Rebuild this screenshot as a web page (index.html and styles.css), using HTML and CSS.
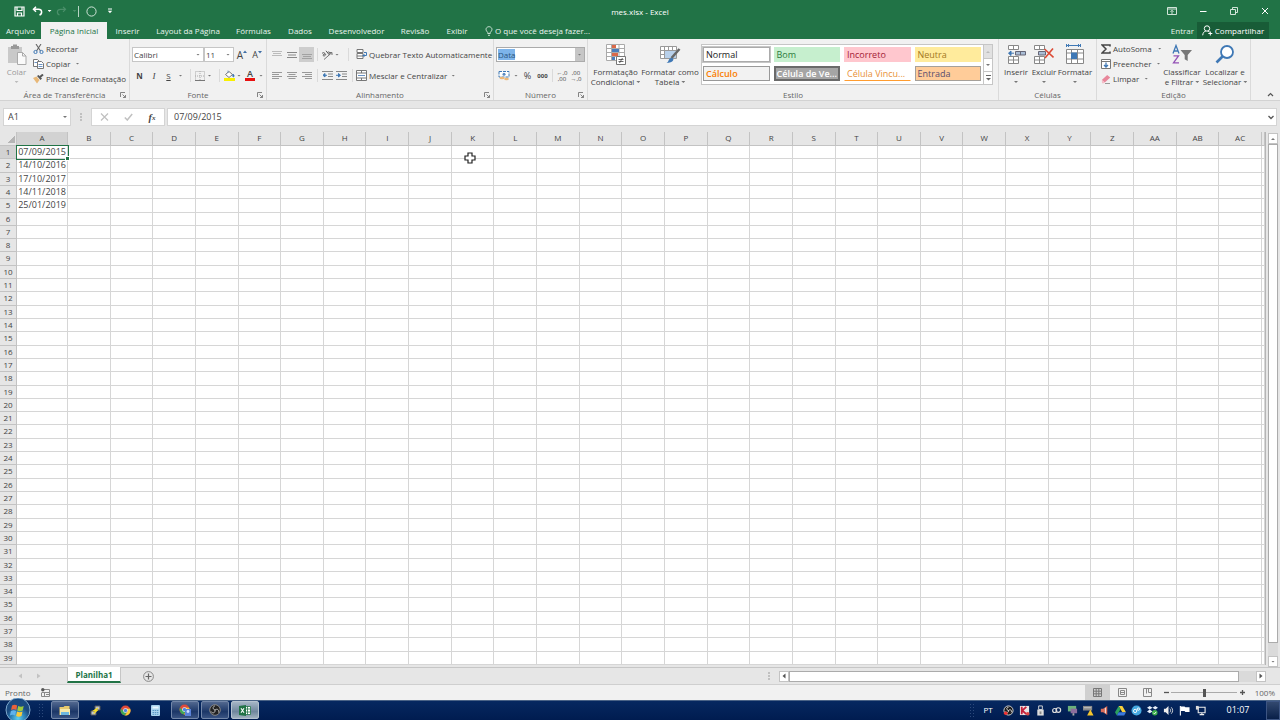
FILE: index.html
```html
<!DOCTYPE html>
<html lang="pt-BR">
<head>
<meta charset="utf-8">
<title>mes.xlsx - Excel</title>
<link rel="stylesheet" href="styles.css">
</head>
<body>
<header class="titlebar">
  <div class="qat">
    <button aria-label="Salvar"><svg width="11" height="11" viewBox="0 0 11 11"><path d="M1 1h9v9H1zM3 1v3.500h5V1M3.500 10V7h4v3" fill="none" stroke="#fff" stroke-width="1.200"/></svg></button>
    <button aria-label="Desfazer"><svg width="11" height="10" viewBox="0 0 11 10"><path d="M4 .8 1.500 3.300 4 5.800M1.700 3.300H6.500c4 0 4 4.500 1 5.700" fill="none" stroke="#fff" stroke-width="1.500"/></svg></button>
    <i class="caret light"></i>
    <button aria-label="Refazer"><svg width="11" height="10" viewBox="0 0 11 10"><path d="M7 .8 9.500 3.300 7 5.800M9.300 3.300H4.500c-4 0-4 4.500-1 5.700" fill="none" stroke="#4b8f6a" stroke-width="1.200"/></svg></button>
    <i class="caret dim"></i>
    <i class="qat-sep"></i>
    <button aria-label="Forma"><svg width="11" height="11" viewBox="0 0 11 11"><circle cx="5.500" cy="5.500" r="4.600" fill="none" stroke="#cfe3d7"/></svg></button>
    <button aria-label="Personalizar"><svg width="6" height="6" viewBox="0 0 6 6"><path d="M1 1h4" stroke="#fff"/><path d="M.8 2.800h4.400L3 5.200z" fill="#fff"/></svg></button>
  </div>
  <h1>mes.xlsx - Excel</h1>
  <div class="window-controls">
    <button aria-label="Opções da faixa"><svg width="10" height="8" viewBox="0 0 10 8"><path d="M.5.5h9v7h-9zM.5 2h9M5 7V3.500M3.500 4.800 5 3.300l1.500 1.500" fill="none" stroke="#e4f0e9" stroke-width=".9"/></svg></button>
    <button aria-label="Minimizar"><svg width="8" height="8" viewBox="0 0 8 8"><path d="M1 4.500h6.500" stroke="#fff"/></svg></button>
    <button aria-label="Restaurar"><svg width="8" height="8" viewBox="0 0 8 8"><path d="M.5 2.500h5v5h-5zM2.500 2.500v-2h5v5h-2" fill="none" stroke="#e4f0e9" stroke-width=".9"/></svg></button>
    <button aria-label="Fechar"><svg width="8" height="8" viewBox="0 0 8 8"><path d="m1 1 6 6M7 1 1 7" stroke="#fff"/></svg></button>
  </div>
</header>
<nav class="tabs">
  <button>Arquivo</button><button class="active">Página Inicial</button><button>Inserir</button><button>Layout da Página</button><button>Fórmulas</button><button>Dados</button><button>Desenvolvedor</button><button>Revisão</button><button>Exibir</button>
  <button class="tell"><svg width="8" height="10" viewBox="0 0 8 10"><path d="M2.700 7.500V6.300C-.5 3.500 1.500.7 4 .7s4.500 2.800 1.300 5.600v1.200zM3 9.300h2" fill="none" stroke="#d8eadf" stroke-width=".9"/></svg>O que você deseja fazer...</button>
  <button class="entrar">Entrar</button>
  <button class="share"><svg width="11" height="11" viewBox="0 0 11 11"><circle cx="5" cy="3.500" r="2.700" fill="none" stroke="#fff"/><path d="M.7 10.300c.2-2.600 1.500-4 3-4M5.700 6.200c1 0 1.600.4 2 1M8.300 6.500v4M6.300 8.500h4" fill="none" stroke="#fff"/></svg>Compartilhar</button>
</nav>
<main class="ribbon">
  <section class="group g-clip">
    <div class="body">
      <button class="big off"><svg width="20" height="21" viewBox="0 0 20 21"><path d="M1 3h14v16H1z" fill="#c9c9c9"/><path d="M4 2h2V.5h4V2h2v3H4z" fill="#999"/><path d="M10.500 8.500h5l3.500 3.500v8.500h-8.500z" fill="#fafafa" stroke="#aaa"/><path d="M15.500 8.500V12H19" fill="none" stroke="#aaa"/></svg><span>Colar</span><i class="caret dimgrey"></i></button>
      <div class="stack">
        <button><svg width="11" height="10" viewBox="0 0 11 10"><path d="m3 0 4.500 7M8 0 3.500 7" stroke="#666" stroke-width="1.100"/><circle cx="2.500" cy="8" r="1.600" fill="none" stroke="#3f78b5"/><circle cx="8.500" cy="8" r="1.600" fill="none" stroke="#3f78b5"/></svg>Recortar</button>
        <button><svg width="11" height="10" viewBox="0 0 11 10"><path d="M.5.5h4l1.500 1.500v5.500H.5z" fill="#fff" stroke="#777"/><path d="M4.500 2.500h4l2 2v5h-6z" fill="#fff" stroke="#777"/><path d="M5.500 5.500h4M5.500 7.500h4M1.500 3.500H4" stroke="#6b93c4"/></svg>Copiar<i class="caret"></i></button>
        <button><svg width="11" height="10" viewBox="0 0 11 10"><path d="m0 4 3.500-1.500L6.500 6 4 9.500z" fill="#e8b878"/><path d="m4 2 3.500 4 1.500-1.500L5.500 1z" fill="#555"/><path d="m7 3 3-2.500" stroke="#555" stroke-width="2"/></svg>Pincel de Formatação</button>
      </div>
    </div>
    <footer><span>Área de Transferência</span><svg class="launch" width="6" height="6"><use href="#launch"/></svg></footer>
  </section>
  <section class="group g-font">
    <div class="body two">
      <div class="row f1">
        <div class="combo"><input aria-label="Fonte" value="Calibri"><button aria-label="Abrir"><i class="caret"></i></button></div>
        <div class="combo"><input aria-label="Tamanho" value="11"><button aria-label="Abrir"><i class="caret"></i></button></div>
        <button class="fs">A<svg width="4" height="4" viewBox="0 0 4 4"><path d="m0 3 2-2.500L4 3z" fill="#3f6ea5"/></svg></button>
        <button class="fs small">A<svg width="4" height="4" viewBox="0 0 4 4"><path d="m0 1 2 2.500L4 1z" fill="#3f6ea5"/></svg></button>
      </div>
      <div class="row f2">
        <button><b>N</b></button><button class="ital">I</button><button><u>S</u></button><i class="caret"></i><i class="vsep"></i>
        <button aria-label="Bordas"><svg width="10" height="10" viewBox="0 0 10 10"><path d="M.5.5h9v9h-9zM5 0v10M0 5h10" fill="none" stroke="#aaa" stroke-dasharray="1 1"/><path d="M0 9.500h10" stroke="#777"/></svg></button><i class="caret"></i><i class="vsep"></i>
        <button aria-label="Preenchimento"><svg width="11" height="11" viewBox="0 0 11 11"><path d="m1.500 4.500 3.500-3 3.500 3-3.500 3z" fill="#fff" stroke="#777"/><path d="M4 3V.5M9 4c2 1.500 1 3 .3 3S8.300 5 9 4" fill="#3f78b5" stroke="#3f78b5" stroke-width=".6"/><path d="M0 8h11v3H0z" fill="#f8f000"/></svg></button><i class="caret"></i>
        <button class="fcolor">A</button><i class="caret"></i>
      </div>
    </div>
    <footer><span>Fonte</span><svg class="launch" width="6" height="6"><use href="#launch"/></svg></footer>
  </section>
  <section class="group g-align">
    <div class="body two">
      <div class="row a1">
        <button aria-label="Superior"><svg width="10" height="8" viewBox="0 0 10 8"><path d="M0 .5h10M1 2.500h8M0 4.500h10" stroke="#bbb"/></svg></button>
        <button aria-label="Meio"><svg width="10" height="8" viewBox="0 0 10 8"><path d="M0 1.500h10M1 4h8M0 6.500h10" stroke="#888"/></svg></button>
        <button aria-label="Inferior" class="pressed"><svg width="10" height="8" viewBox="0 0 10 8"><path d="M0 3.500h10M1 5.500h8M0 7.500h10" stroke="#a2a2a2"/></svg></button>
        <i class="vsep"></i>
        <button aria-label="Orientação"><svg width="12" height="10" viewBox="0 0 12 10"><path d="m3 9.500 8-7M11 5V2.500H8.500" fill="none" stroke="#777"/><path d="M1 3.500c2-2 3 0 4 1.500M4 4C1 4 2 7.500 4.500 5.200M5 .8l3 3.700c1.800-1.500.2-3.500-1.500-2" fill="none" stroke="#555"/></svg></button><i class="caret"></i><i class="vsep"></i>
        <button class="lbl"><svg width="11" height="11" viewBox="0 0 11 11"><path d="M1 .5h6v3H1zM1 4.500h6v5H1zM1 7h6" fill="#fff" stroke="#777"/><path d="M8 3.500h2.500v3H7M8.500 5 7 6.500 8.500 8" fill="none" stroke="#3f78b5"/></svg>Quebrar Texto Automaticamente</button>
      </div>
      <div class="row a2">
        <button aria-label="Esquerda"><svg width="10" height="8" viewBox="0 0 10 8"><path d="M0 .5h10M0 2.500h7M0 4.500h10M0 6.500h7" stroke="#999"/></svg></button>
        <button aria-label="Centro"><svg width="10" height="8" viewBox="0 0 10 8"><path d="M0 .5h10M1.500 2.500h7M0 4.500h10M1.500 6.500h7" stroke="#999"/></svg></button>
        <button aria-label="Direita"><svg width="10" height="8" viewBox="0 0 10 8"><path d="M0 .5h10M3 2.500h7M0 4.500h10M3 6.500h7" stroke="#999"/></svg></button>
        <i class="vsep"></i>
        <button aria-label="Diminuir recuo"><svg width="11" height="9" viewBox="0 0 11 9"><path d="M0 .5h11M6 3h5M6 5.500h5M0 8.500h11" stroke="#888"/><path d="M5 4.300H1.500M3 2.500 1 4.300 3 6z" fill="#3f78b5" stroke="#3f78b5"/></svg></button>
        <button aria-label="Aumentar recuo"><svg width="11" height="9" viewBox="0 0 11 9"><path d="M0 .5h11M6 3h5M6 5.500h5M0 8.500h11" stroke="#888"/><path d="M0 4.300h3.500M2.500 2.500l2 1.800-2 1.700z" fill="#3f78b5" stroke="#3f78b5"/></svg></button>
        <i class="vsep"></i>
        <button class="lbl"><svg width="11" height="11" viewBox="0 0 11 11"><path d="M.5.5h10v10H.5zM.5 3h10M.5 8h10M5.500.5V3M5.500 8v2.500" fill="#fff" stroke="#777"/><path d="M2 5.500h7" stroke="#6b93c4"/></svg>Mesclar e Centralizar<i class="caret"></i></button>
      </div>
    </div>
    <footer><span>Alinhamento</span><svg class="launch" width="6" height="6"><use href="#launch"/></svg></footer>
  </section>
  <section class="group g-num">
    <div class="body two">
      <div class="row n1"><div class="combo picked"><input aria-label="Formato de número" value="Data"><button aria-label="Abrir"><i class="caret"></i></button></div></div>
      <div class="row n2">
        <button aria-label="Moeda"><svg width="12" height="11" viewBox="0 0 12 11"><path d="M1 1.500h10v5.500H1z" fill="#fff" stroke="#3f78b5" stroke-dasharray="3 1"/><circle cx="6" cy="4.200" r="1.500" fill="#5a8ac0"/><ellipse cx="4" cy="8" rx="2.500" ry="1.300" fill="#edb878"/><ellipse cx="8.500" cy="9" rx="2.300" ry="1.300" fill="#edb878"/></svg></button><i class="caret"></i>
        <button class="pct">%</button><button class="dec"><b>000</b></button><i class="vsep"></i>
        <button class="dec" aria-label="Aumentar casas"><span>←,0</span><span>,00</span></button>
        <button class="dec" aria-label="Diminuir casas"><span>,00</span><span>→,0</span></button>
      </div>
    </div>
    <footer><span>Número</span><svg class="launch" width="6" height="6"><use href="#launch"/></svg></footer>
  </section>
  <section class="group g-style">
    <div class="body">
      <button class="big"><svg width="20" height="21" viewBox="0 0 20 21"><path d="M.5.5h18v16H.5zM.5 4.500h18M.5 8.500h18M.5 12.500h18M5.500.5v16M13 .5v16" fill="#fff" stroke="#aaa"/><path d="M6 1h4v3H6zM6 9h6v3H6z" fill="#d9694a"/><path d="M6 5h7v3H6zM6 13h3v3H6z" fill="#4a7dbb"/><path d="M10.500 12.500h9v8h-9z" fill="#fff" stroke="#777"/><path d="M12.500 15.500h5M12.500 17.500h5M16.500 14l-3 5" stroke="#444" stroke-width=".8"/></svg><span>Formatação</span><span>Condicional<i class="caret"></i></span></button>
      <button class="big"><svg width="21" height="21" viewBox="0 0 21 21"><path d="M.5 2.500h16v12H.5zM.5 6.500h16M.5 10.500h16M4.500 2.500v12M8.500 2.500v12M12.500 2.500v12" fill="#fff" stroke="#999"/><path d="M5 7h11v7H5z" fill="#b8d0ea"/><path d="m19.500 5-8 9" stroke="#666" stroke-width="2.500"/><path d="M6 19c3 0 2-5 5.500-5s2.500 5-5.500 5" fill="#3f78b5"/></svg><span>Formatar como</span><span>Tabela<i class="caret"></i></span></button>
      <div class="gallery">
        <div class="swatches">
          <button class="s-normal">Normal</button><button class="s-bom">Bom</button><button class="s-inc">Incorreto</button><button class="s-neu">Neutra</button>
          <button class="s-calc">Cálculo</button><button class="s-ver">Célula de Ve...</button><button class="s-vin">Célula Vincu...</button><button class="s-ent">Entrada</button>
        </div>
        <div class="spin"><button class="off" aria-label="Acima"><i class="caret up dimgrey"></i></button><button aria-label="Abaixo"><i class="caret"></i></button><button aria-label="Mais"><svg width="5" height="6" viewBox="0 0 5 6"><path d="M0 .5h5" stroke="#666"/><path d="M0 3h5L2.500 5.500z" fill="#666"/></svg></button></div>
      </div>
    </div>
    <footer><span>Estilo</span></footer>
  </section>
  <section class="group g-cells">
    <div class="body">
      <button class="big"><svg width="19" height="21" viewBox="0 0 19 21"><path d="M1.500 1.500h10v4h-10zM6.500 1.500v4M1.500 12.500h10v7h-10zM6.500 12.500v7M1.500 16h10" fill="#fff" stroke="#888"/><path d="M8.500 7.500h10v3.500h-10z" fill="#a9bdd6" stroke="#667"/><path d="M13.500 7.500V11" stroke="#667"/><path d="M7 9.200H2M4 7 1.500 9.200 4 11.500z" fill="#3f78b5" stroke="#3f78b5"/></svg><span>Inserir</span><i class="caret"></i></button>
      <button class="big"><svg width="20" height="21" viewBox="0 0 20 21"><path d="M.5 1.500h10v4H.5zM5.500 1.500v4M.5 12.500h10v7H.5zM5.500 12.500v7M.5 16h10" fill="#fff" stroke="#888"/><path d="M4.500 7.500h7V11h-7z" fill="#a9bdd6" stroke="#667"/><path d="m10.500 5 9 8.500M19 4.500 11 14" stroke="#dc4a35" stroke-width="1.600"/></svg><span>Excluir</span><i class="caret"></i></button>
      <button class="big"><svg width="20" height="21" viewBox="0 0 20 21"><path d="M1.500 1.500h14M1.500 0v3M15.500 0v3M4 0 2.500 1.500 4 3M13 0l1.500 1.500L13 3" fill="none" stroke="#3f78b5"/><path d="M1.500 5.500h17v14h-17zM1.500 9h17M1.500 15h17M6.500 5.500v14M12.500 5.500v14" fill="#fff" stroke="#888"/><path d="M6 8.500h6V15H6z" fill="#3f78b5"/></svg><span>Formatar</span><i class="caret"></i></button>
    </div>
    <footer><span>Células</span></footer>
  </section>
  <section class="group g-edit">
    <div class="body">
      <div class="stack">
        <button><svg width="10" height="10" viewBox="0 0 10 10"><path d="M9 2.500V1H1l4 4-4 4h8V7.500" fill="none" stroke="#444" stroke-width="1.500"/></svg>AutoSoma<i class="caret wide"></i></button>
        <button><svg width="10" height="10" viewBox="0 0 10 10"><path d="M.5.5h9v9h-9zM.5 2.500h9" fill="#fff" stroke="#777"/><path d="M5 3.500V8M3 6l2 2 2-2" fill="none" stroke="#3f78b5" stroke-width="1.300"/></svg>Preencher<i class="caret"></i></button>
        <button><svg width="10" height="10" viewBox="0 0 10 10"><path d="m.8 6 5.400-5 3 2.500-5.400 5z" fill="#e8879b"/><path d="m.8 6 3 2.500L3 9.300H1z" fill="#f5bcc7"/><path d="M4 9.500h5" stroke="#999"/></svg>Limpar<i class="caret"></i></button>
      </div>
      <button class="big"><svg width="20" height="21" viewBox="0 0 20 21"><path d="M1 9.500 4 1.500l3 8M2 7h4" fill="none" stroke="#3f78b5" stroke-width="1.300"/><path d="M1.500 11.800h5l-5 7h5.500" fill="none" stroke="#9351b5" stroke-width="1.300"/><path d="M8.500 6h11.500l-4.300 5v6l-3-1.800V11z" fill="#777"/></svg><span>Classificar</span><span>e Filtrar<i class="caret"></i></span></button>
      <button class="big"><svg width="20" height="21" viewBox="0 0 20 21"><circle cx="12" cy="8" r="6" fill="#fff" stroke="#3f78b5" stroke-width="1.800"/><path d="m7.500 12.500-6 6" stroke="#3f78b5" stroke-width="2.600"/></svg><span>Localizar e</span><span>Selecionar<i class="caret"></i></span></button>
    </div>
    <footer><span>Edição</span></footer>
  </section>
  <button class="collapse" aria-label="Recolher"><svg width="7" height="5" viewBox="0 0 7 5"><path d="m1 4 2.500-2.500L6 4" fill="none" stroke="#555" stroke-width="1.200"/></svg></button>
</main>
<div class="formula">
  <div class="combo namebox"><input aria-label="Caixa de nome" value="A1"><button aria-label="Abrir"><i class="caret"></i></button></div>
  <i class="dots"></i>
  <div class="fx">
    <button aria-label="Cancelar"><svg width="9" height="8" viewBox="0 0 9 8"><path d="m1 .5 7 7M8 .5l-7 7" stroke="#c0c0c0" stroke-width="1.200"/></svg></button>
    <button aria-label="Inserir"><svg width="9" height="8" viewBox="0 0 9 8"><path d="m.8 4.500 2.500 2.500L8.200 1" fill="none" stroke="#c0c0c0" stroke-width="1.500"/></svg></button>
    <button class="fn">f<small>x</small></button>
  </div>
  <div class="combo bar"><input aria-label="Barra de fórmulas" value="07/09/2015"><button aria-label="Expandir"><svg width="6" height="5" viewBox="0 0 6 5"><path d="m.5 1 2.500 2.500L5.500 1" fill="none" stroke="#555" stroke-width="1.300"/></svg></button></div>
</div>
<div class="sheet">
  <div class="cells">
    <table id="grid"><thead></thead><tbody></tbody></table>
    <svg class="pointer" width="12" height="12" viewBox="0 0 12 12"><path d="M4 1h4v3h3v4H8v3H4V8H1V4h3z" fill="#fff" stroke="#222" stroke-width="1.200"/></svg>
  </div>
  <div class="vscroll"><button aria-label="Para cima"><i class="caret up"></i></button><div class="thumb"></div><div class="track"></div><button aria-label="Para baixo"><i class="caret"></i></button></div>
</div>
<div class="sheetbar">
  <button class="nav" aria-label="Anterior"><svg width="4" height="6" viewBox="0 0 4 6"><path d="M4 .5v5L.5 3z" fill="#c2c2c2"/></svg></button>
  <button class="nav" aria-label="Próxima"><svg width="4" height="6" viewBox="0 0 4 6"><path d="M0 .5v5L3.500 3z" fill="#c2c2c2"/></svg></button>
  <button class="sheettab">Planilha1</button>
  <button class="add" aria-label="Nova planilha"><svg width="11" height="11" viewBox="0 0 11 11"><path d="M5.500 2.500v6M2.500 5.500h6" stroke="#666" stroke-width="1.200"/><circle cx="5.500" cy="5.500" r="4.900" fill="none" stroke="#888"/></svg></button>
  <i class="dots"></i>
  <div class="hscroll"><button aria-label="Esquerda"><svg width="4" height="6" viewBox="0 0 4 6"><path d="M3.500.5v5L.5 3z" fill="#555"/></svg></button><div class="thumb"></div><div class="track"></div><button aria-label="Direita"><svg width="4" height="6" viewBox="0 0 4 6"><path d="M.5.5v5L3.500 3z" fill="#555"/></svg></button></div>
</div>
<footer class="status">
  <span>Pronto</span>
  <button class="macro" aria-label="Gravar macro"><svg width="9" height="9" viewBox="0 0 9 9"><path d="M3 1.500h5.500v7h-8V5M.5 4.500h8M3.500 4.500v4M5 6.500h3" fill="none" stroke="#888"/><circle cx="1.800" cy="1.800" r="1.700" fill="#555"/></svg></button>
  <div class="views">
    <button class="on" aria-label="Normal"><svg width="9" height="9" viewBox="0 0 9 9"><path d="M.5.500h8v8h-8zM.5 3.200h8M.5 5.800h8M3.200.5v8M5.800.5v8" fill="none" stroke="#777"/></svg></button>
    <button aria-label="Layout da página"><svg width="9" height="9" viewBox="0 0 9 9"><path d="M.5.500h8v8h-8zM2.500 2.500h4v4h-4zM3 4.500h3" fill="none" stroke="#888"/></svg></button>
    <button aria-label="Quebra de página"><svg width="9" height="9" viewBox="0 0 9 9"><path d="M.5.500h8v8h-8zM3.500.5v5M5.500.5v4h3" fill="none" stroke="#888"/></svg></button>
  </div>
  <button class="zoom-btn" aria-label="Reduzir"><svg width="5" height="5" viewBox="0 0 5 5"><path d="M0 2.500h5" stroke="#555" stroke-width="1.300"/></svg></button>
  <input type="range" aria-label="Zoom" min="0" max="100" value="50">
  <button class="zoom-btn" aria-label="Ampliar"><svg width="5" height="5" viewBox="0 0 5 5"><path d="M0 2.500h5M2.500 0v5" stroke="#555" stroke-width="1.300"/></svg></button>
  <span class="pct100">100%</span>
</footer>
<div class="taskbar">
  <button class="start" aria-label="Iniciar"><svg width="26" height="22" viewBox="0 0 26 22"><defs><radialGradient id="orb" cy=".85"><stop offset="0" stop-color="#5fd0f0"/><stop offset=".6" stop-color="#2c7fb5"/><stop offset="1" stop-color="#1a4a80"/></radialGradient></defs><circle cx="13" cy="12" r="12" fill="url(#orb)" stroke="#7fa8cc"/><path d="M7 7.500c2-1 3.500-1 5.200 0l-.9 4.500c-1.700-1-3.200-1-5.200 0z" fill="#e8623a"/><path d="M13.200 8c2 1 3.500 1 5.500 0l-1 4.500c-2 1-3.500 1-5.400 0z" fill="#9ccb3d"/><path d="M5.900 13c2-1 3.500-1 5.200 0l-1 4.500c-1.700-1-3.200-1-5.200 0z" fill="#5fb2ec"/><path d="M12.100 13.500c2 1 3.500 1 5.400 0l-1 4.500c-2 1-3.500 1-5.400 0z" fill="#f8ca3c"/></svg></button>
  <i class="grip"></i>
  <button class="app open" aria-label="Explorador"><svg width="12" height="11" viewBox="0 0 12 11"><path d="M.5 2h4l1-1h5v9H.5z" fill="#e6c96e"/><path d="M1 4h10v6H1z" fill="#f8e9a8"/><path d="M2 7h8v3H2z" fill="#6eb8e0"/></svg></button>
  <button class="app" aria-label="PuTTY"><svg width="11" height="11" viewBox="0 0 11 11"><path d="M5 1h5v4H5zM1 6h5v4H1z" fill="#bbc3cf" stroke="#555"/><path d="M8 3 4 5.500h3L3.500 8.500" fill="none" stroke="#f8de28" stroke-width="1.300"/></svg></button>
  <button class="app" aria-label="Chrome"><svg width="11" height="11" viewBox="0 0 11 11"><use href="#chrome"/></svg></button>
  <button class="app" aria-label="Calculadora"><svg width="9" height="11" viewBox="0 0 9 11"><rect width="9" height="11" rx="1" fill="#a9d3ec"/><path d="M1.500 1.500h6v2h-6z" fill="#e9f7ff"/><path d="M1.500 5.500h6M1.500 7.500h6M1.500 9.300h6" stroke="#5a98c5" stroke-dasharray="1.500 .7"/></svg></button>
  <button class="app open" aria-label="Chrome aberto"><svg width="13" height="12" viewBox="0 0 13 12"><use href="#chrome" width="11" height="11"/><path d="M6 5h6v7H6z" fill="#5a82d8"/><circle cx="9" cy="7.500" r="1.400" fill="#cfe0ff"/></svg></button>
  <button class="app open" aria-label="OBS"><svg width="12" height="12" viewBox="0 0 12 12"><circle cx="6" cy="6" r="5.300" fill="#222" stroke="#888"/><path d="M6 6c-3-1-2-4 0-4M6 6c2.500-2 4.500.5 3.500 2.500M6 6c.5 3.500-3 3.500-4 1.500" fill="none" stroke="#bbb"/></svg></button>
  <button class="app open current" aria-label="Excel"><svg width="12" height="11" viewBox="0 0 12 11"><path d="M5 1.500h6.500v8H5zM8.500 1.500v8M6 4h5M6 7h5" fill="#fff" stroke="#217346" stroke-width=".8"/><path d="M0 1 7 0v11L0 10z" fill="#217346"/><path d="m2 3.200 3 4.600M5 3.200 2 7.800" stroke="#fff" stroke-width="1.100"/></svg></button>
  <div class="tray">
    <i class="grip"></i><span class="lang">PT</span>
    <svg viewBox="0 0 12 12"><circle cx="6" cy="6" r="5" fill="#1b1b1b" stroke="#ddd"/><path d="M6 6C3 5 4 2.500 6 2.500M6 6c2-2 4 0 3 2M6 6c0 3-2.500 3-3 1" fill="none" stroke="#eee"/><circle cx="3" cy="9" r="2" fill="#e33"/></svg>
    <svg viewBox="0 0 12 12"><path d="M1 1h10v10H1z" fill="#e9e5e5"/><path d="M3 2v8M8 2 3.500 6 8 10" stroke="#c3203c" stroke-width="2" fill="none"/><circle cx="9.500" cy="9.500" r="2" fill="#d44"/></svg>
    <svg viewBox="0 0 12 12"><path d="M4 1h4v4H4z" fill="none" stroke="#ddd"/><path d="M2.500 5h7v6.500h-7z" fill="#ddd"/><path d="M5 7h2v3H5z" fill="#888"/></svg>
    <svg viewBox="0 0 12 12"><circle cx="4" cy="6" r="2.200" fill="none" stroke="#ddd" stroke-width="1.300"/><circle cx="8" cy="5.500" r="2.500" fill="none" stroke="#ddd" stroke-width="1.300"/></svg>
    <svg viewBox="0 0 12 12"><path d="M1 1h9v6H1z" fill="#6bb07b"/><path d="M4 4h7v5H4z" fill="#8d6d9d"/><path d="M6 9h2v2.500H6z" fill="#aaa"/></svg>
    <svg viewBox="0 0 12 12"><path d="M0 1h10v5H0z" fill="#8a8a8a"/><path d="M1 3h8" stroke="#ccc"/><path d="M8 5 11.500 11.500h-7z" fill="#f5c52c"/></svg>
    <svg viewBox="0 0 12 12"><path d="M2 4h2.500L9 1v10L4.500 8H2z" fill="#d96b58"/><path d="M7 3v6" stroke="#eee"/></svg>
    <svg viewBox="0 0 12 12"><path d="M4 1h4l4 7H8z" fill="#f9cf3a"/><path d="M4 1 0 8l2 3.500 4-7z" fill="#2ba05e"/><path d="M4 8h8l-2 3.500H2z" fill="#3b78dd"/></svg>
    <svg viewBox="0 0 12 12"><circle cx="6" cy="6" r="5.500" fill="#45a8e0"/><circle cx="4.500" cy="6.500" r="1.800" fill="none" stroke="#fff"/><circle cx="8" cy="4.500" r="1.300" fill="none" stroke="#fff"/></svg>
    <svg viewBox="0 0 12 12"><path d="m3 1 3 2-3 2-3-2zM9 1l3 2-3 2-3-2zM3 5l3 2-3 2-3-2z" fill="#e8f0fa"/><circle cx="8.500" cy="8.500" r="3" fill="#3cae4c"/><path d="m7 8.500 1.200 1.200L10 7.500" fill="none" stroke="#fff"/></svg>
    <svg viewBox="0 0 12 12"><path d="M1 4h2l3-3v10L3 8H1z" fill="#eee"/><path d="M7.500 4c1 1 1 3 0 4M9 2.500c2 2 2 5 0 7" fill="none" stroke="#ddd"/></svg>
    <svg viewBox="0 0 12 12"><path d="M1.500 1v10.500" stroke="#fff" stroke-width="1.200"/><path d="M2 1.500h4l1 1h4.500v5H7l-1-1H2z" fill="#fff"/></svg>
    <svg viewBox="0 0 12 12"><path d="M3.500 2.500h7.500v6H3.500zM5 10.500h5M7.500 8.500v2" fill="none" stroke="#eee" stroke-width="1.200"/><path d="M1 1h3v4H1z" fill="#ddd"/></svg>
    <time>01:07</time>
    <button class="peek" aria-label="Mostrar área de trabalho"></button>
  </div>
</div>
<svg class="defs" width="0" height="0"><defs>
  <symbol id="launch" viewBox="0 0 6 6"><path d="M.5 5V.5H5M2.500 2.500l3 3M5.500 3v2.500H3" fill="none" stroke="#777" stroke-width=".9"/></symbol>
  <symbol id="chrome" viewBox="0 0 11 11"><circle cx="5.500" cy="5.500" r="5" fill="#e04a3a"/><path d="M1 3.500A5 5 0 0 0 5 10.500L7 6.500 3.300 6z" fill="#3fa757"/><path d="M10.200 3.700A5 5 0 0 1 5 10.500L8 6 6.500 3.700z" fill="#f5cd3a"/><circle cx="5.500" cy="5.500" r="2.300" fill="#fff"/><circle cx="5.500" cy="5.500" r="1.700" fill="#4a86e0"/></symbol>
</defs></svg>
<script src="grid.js"></script>
</body>
</html>
```
FILE: styles.css
```css
* { box-sizing: border-box; }
body { margin: 0; min-height: 100vh; display: flex; flex-direction: column; background: #e6e6e6; color: #444; font: 8px/10px "Open Sans", "Noto Sans", sans-serif; overflow: hidden; }
button, input { font: inherit; color: inherit; border: 0; background: none; padding: 0; margin: 0; min-width: 0; border-radius: 0; white-space: nowrap; }
button { display: flex; align-items: center; justify-content: center; }
svg { flex: none; display: block; }
.defs { position: absolute; }
.caret { display: inline-block; flex: none; width: 4px; height: 2px; background: #777; clip-path: polygon(0 0, 100% 0, 50% 100%); }
.caret.up { transform: rotate(180deg); }
.caret.light { background: #fff; }
.caret.dim { background: #4b8f6a; }
.caret.dimgrey { background: #bbb; }
.vsep { width: 1px; height: 13px; background: #dadada; }

.titlebar { height: 22px; background: #217346; color: #fff; display: grid; grid-template-columns: 1fr auto 1fr; align-items: center; }
.titlebar h1 { margin: 0; font-size: 8px; font-weight: 400; padding-top: 2px; }
.qat { display: grid; grid-template-columns: 14px 22px 3px 21px 5px 3px 22px 16px; padding-left: 12px; align-items: center; justify-items: center; height: 20px; }
.qat-sep { width: 1px; height: 11px; background: #b9d5c5; }
.window-controls { display: grid; grid-template-columns: repeat(4, 31px); justify-content: end; height: 20px; align-items: center; }

.tabs { height: 17px; background: #217346; color: #e9f4ee; display: grid; grid-template-columns: 41px 66px 41px 80px 51px 42px 71px 46px 38px auto 1fr 72px; padding-right: 11px; }
.tabs .active { background: #f1f1f1; color: #217346; }
.tell { gap: 2px; padding-left: 9px; }
.tabs .entrar { justify-self: end; padding-right: 3px; }
.tabs .share { background: #185c37; gap: 2px; color: #fff; }

.ribbon { display: flex; height: 62px; background: #f1f1f1; border-bottom: 1px solid #d2d2d2; }
.group { display: flex; flex-direction: column; border-right: 1px solid #dadada; flex: none; }
.group .body { flex: 1; display: flex; align-items: flex-start; }
.group footer { height: 10px; display: grid; grid-template-columns: 6px 1fr 6px; padding: 0 3px; align-items: center; color: #666; }
.group footer span { grid-column: 2; text-align: center; }
.body.two { flex-direction: column; }
.g-clip { width: 130px; }
.g-font { width: 137px; }
.g-align { width: 227px; }
.g-num { width: 94px; }
.g-style { width: 411px; }
.g-cells { width: 98px; }
.g-edit { width: 154px; }
.big { flex-direction: column; padding-top: 5px; }
.big span { display: flex; align-items: center; gap: 2px; }
.big svg { margin-bottom: 2px; }
.big > .caret { margin-top: 4px; }
.off { color: #999; }
.stack { display: flex; flex-direction: column; padding-top: 2px; }
.stack button { height: 15px; gap: 2px; justify-content: flex-start; }
.stack .caret { margin-left: 3px; }
.stack .caret.wide { margin-left: 4px; }
.g-clip .big { width: 33px; }
.row { display: grid; align-items: center; justify-items: center; height: 21px; }
.body.two { padding-top: 5px; }
.combo { display: flex; width: 100%; height: 15px; background: #fff; border: 1px solid #c6c6c6; }
.combo input { flex: 1; width: 0; padding-left: 1px; outline: 0; }
.combo button { width: 10px; }
.f1 { grid-template-columns: 72px 30px 16px 14px; padding-left: 2px; }
.f2 { grid-template-columns: 15px 14px 15px 9px 10px 9px 11px 8px 12px 8px 14px 8px; padding-left: 2px; }
.fs { font-size: 10px; align-items: flex-start; }
.fs.small { font-size: 9px; }
.ital { font-family: "Liberation Serif", serif; font-style: italic; font-size: 9px; }
.fcolor { width: 10px; height: 11px; font-weight: 600; font-size: 9px; line-height: 8px; border-bottom: 3px solid #e81010; }
.a1 { grid-template-columns: 15px 15px 15px 6px 13px 8px 15px 128px; padding-left: 2px; }
.a2 { grid-template-columns: 15px 15px 15px 6px 14px 14px 8px 109px; padding-left: 2px; }
.pressed { background: #cdcdcd; width: 15px; height: 15px; }
.lbl { justify-self: start; gap: 2px; }
.lbl .caret { margin-left: 2px; }
.n1 { padding: 0 2px; width: 100%; }
.picked { border-color: #ababab; }
.picked input { background: linear-gradient(#7db4ea, #7db4ea) 1px 50% / 17px 11px no-repeat; color: #2b5480; }
.picked button { background: #c6c6c6; width: 9px; }
.n2 { grid-template-columns: 16px 8px 15px 15px 5px 14px 14px; padding-left: 2px; }
.pct { font-size: 9px; }
.dec { flex-direction: column; font-size: 6px; line-height: 6px; }
.g-style .big:first-child { width: 55px; }
.g-style .big { width: 54px; }
.gallery { flex: 1; margin: 5px 5px 0 4px; height: 41px; border: 1px solid #c6c6c6; background: #fff; display: flex; }
.swatches { flex: 1; display: grid; grid-template-columns: repeat(4, 1fr); grid-template-rows: 15px 15px; gap: 4px; padding: 2px 2px 2px 1px; }
.swatches button { justify-content: flex-start; padding-left: 2px; font-size: 9px; border: 1px solid transparent; }
.s-normal { outline: 1px solid #c6c6c6; color: #222; }
.swatches .s-normal { border-color: #ababab; }
.s-bom { background: #c6efce; color: #2d7a3c; }
.s-inc { background: #ffc7ce; color: #a32035; }
.s-neu { background: #ffeb9c; color: #a3771d; }
.swatches .s-calc { background: #f2f2f2; color: #fa7d00; font-weight: 600; border-color: #999; }
.swatches .s-ver { background: #a5a5a5; color: #fff; font-weight: 600; border: 2px solid #6a6a6a; padding-left: 1px; }
.swatches .s-vin { color: #e8913a; border-bottom-color: #ff9c30; }
.swatches .s-ent { background: #ffcc99; color: #594d6e; border-color: #a5a09a; }
.spin { width: 9px; display: grid; grid-template-rows: 1fr 1fr 1fr; border-left: 1px solid #c6c6c6; }
.spin button + button { border-top: 1px solid #c6c6c6; }
.spin .off { background: #e1e1e1; }
.g-cells .body { padding-left: 3px; }
.g-cells .big { width: 28px; }
.g-cells .big:last-child { width: 34px; }
.g-edit .stack { width: 63px; padding-left: 4px; }
.g-edit .big { width: 44px; }
.g-edit .big:last-child { width: 42px; }
.collapse { margin-left: auto; width: 20px; align-self: flex-end; height: 12px; }

.formula { height: 31px; display: flex; padding: 7px 3px 6px; }
.formula .combo { height: 18px; font-size: 9px; border-color: #d4d4d4; }
.formula .namebox { width: 68px; }
.namebox input { padding-left: 4px; }
.dots { width: 20px; background: radial-gradient(circle, #999 1px, transparent 1px) 50% 50% / 2px 3px repeat-y; margin: 5px 0; }
.fx { display: grid; grid-template-columns: 24px 24px 24px; background: #fff; border: 1px solid #d4d4d4; height: 18px; width: 74px; margin-right: 2px; }
.fn { font: italic 700 10px "Liberation Serif", serif; }
.fn small { font-size: 7px; padding-top: 2px; }
.formula .bar { flex: 1; }
.bar input { padding-left: 6px; }

.sheet { flex: 1; display: flex; }
.cells { flex: 1; position: relative; display: flex; background: #fff; border-right: 1px solid #b5b5b5; margin-bottom: 2px; }
#grid { flex: 1; display: grid; grid-template-columns: 17px 51px repeat(28, 1fr) 3px; grid-template-rows: 14px repeat(39, 1fr); font-size: 9px; line-height: 12px; }
#grid thead, #grid tbody, #grid tr { display: contents; }
#grid th { font-weight: 400; font-size: 8px; background: #e6e6e6; border: 0 solid #c3c3c3; border-width: 0 1px 1px 0; padding: 0; overflow: hidden; }
#grid td { border: 0 solid #d6d6d6; border-width: 0 1px 1px 0; padding: 0 1px 0 0; text-align: right; white-space: nowrap; }
#grid th.hot { background: #d2d2d2; }
#grid .corner { background: linear-gradient(135deg, transparent 60%, #b5b5b5 60%) 6px 2px / 9px 9px no-repeat #e6e6e6; }
#grid td.selected { position: relative; outline: 1px solid #217346; }
#grid .selected::after { content: ""; position: absolute; right: -2px; bottom: -2px; width: 3px; height: 3px; background: #217346; outline: 1px solid #fff; }
.pointer { position: absolute; left: 464px; top: 20px; }
.vscroll { width: 14px; padding: 1px 2px 0; display: flex; flex-direction: column; }
.vscroll button, .hscroll button { background: #fff; border: 1px solid #c3c3c3; width: 10px; height: 11px; }
.thumb { background: #fff; border: 1px solid #ababab; }
.vscroll .thumb { flex: 1; }
.vscroll .track { height: 13px; }
.track { background: #dadada; }

.sheetbar { height: 18px; display: flex; border-top: 1px solid #c6c6c6; border-bottom: 1px solid #cfcfcf; padding: 0 14px 0 10px; }
.nav { width: 19px; }
.sheettab { width: 54px; margin: -1px 0 1px 19px; padding-top: 2px; background: #fff; border: 1px solid #c6c6c6; border-width: 0 1px; border-bottom: 2px solid #217346; color: #217346; font-weight: 700; font-size: 8px; }
.add { width: 54px; }
.sheetbar .dots { margin: 4px 0 4px auto; }
.hscroll { flex: 0 1 487px; display: flex; align-items: center; }
.hscroll .thumb { flex: 1; height: 11px; }
.hscroll .track { width: 17px; height: 11px; }

.status { height: 15px; background: #f1f1f1; display: flex; align-items: center; padding: 0 5px; color: #666; }
.macro { margin-left: 11px; }
.views { margin-left: auto; margin-right: 1px; display: flex; height: 100%; }
.views button { width: 25px; }
.views .on { background: #d0d0d0; }
.zoom-btn { width: 10px; }
.status input { appearance: none; width: 66px; height: 13px; background: linear-gradient(#aaa, #aaa) 0 50% / 100% 1px no-repeat; }
.status input::-webkit-slider-thumb { appearance: none; width: 3px; height: 8px; background: #555; }
.pct100 { width: 28px; text-align: right; }

.taskbar { height: 20px; background: linear-gradient(#4a6386 0 1px, #062860 1px, #001c50); display: flex; align-items: center; padding-left: 5px; }
.start { width: 26px; margin-top: -2px; }
.grip { width: 5px; height: 14px; margin: 0 7px; background: radial-gradient(circle, #2d4a7c 1px, transparent 1px) 0 0 / 3px 3px; }
.app { width: 30px; height: 18px; }
.app.open { width: 28px; margin: 0 1px; border: 1px solid #7286a8; border-radius: 2px; background: linear-gradient(#52688f, #1c3768 60%, #395382); }
.app.current { background: linear-gradient(#a5b5c5, #6f869d 60%, #9fb0bd); border-color: #b5c2cf; }
.tray { margin-left: auto; display: grid; grid-template-columns: 10px 24px repeat(13, 16px) 57px 15px; align-items: center; justify-items: center; color: #fff; }
.tray svg { width: 11px; height: 11px; }
.tray .grip { margin: 0; }
.tray time { font-size: 9px; padding-left: 3px; }
.peek { width: 14px; height: 19px; border: 1px solid #3d5583; background: linear-gradient(#33496f, #081f48); justify-self: end; }
```
FILE: grid.js
```javascript
const dates = ["07/09/2015", "14/10/2016", "17/10/2017", "14/11/2018", "25/01/2019"];
const columns = [...Array(29).keys()].map(i => i < 26 ? String.fromCharCode(65 + i) : "A" + String.fromCharCode(39 + i));
const table = document.getElementById("grid");
const head = table.tHead.insertRow();
const addHead = (row, text, name) => {
  const th = document.createElement("th");
  th.textContent = text;
  if (name) th.className = name;
  row.append(th);
};
addHead(head, "", "corner");
columns.forEach((c, i) => addHead(head, c, i === 0 ? "hot" : ""));
addHead(head, "", "");
for (let r = 1; r <= 39; r++) {
  const row = table.tBodies[0].insertRow();
  addHead(row, r, r === 1 ? "hot" : "");
  for (let c = 0; c < 30; c++) {
    const cell = row.insertCell();
    if (c === 0 && dates[r - 1]) cell.textContent = dates[r - 1];
    if (c === 0 && r === 1) cell.className = "selected";
  }
}
```
